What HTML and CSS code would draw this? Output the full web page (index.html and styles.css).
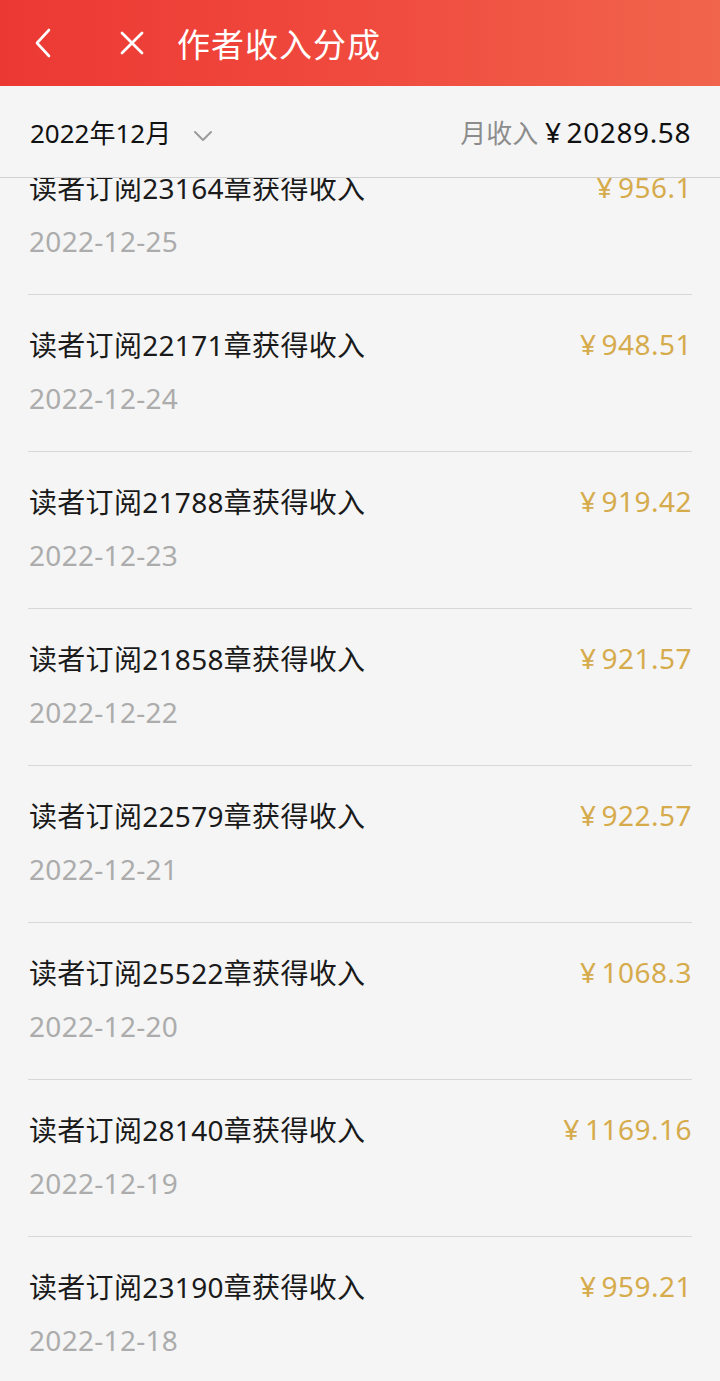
FILE: index.html
```html
<!DOCTYPE html>
<html>
	<head>
		<meta charset="UTF-8">
		<link rel="stylesheet" href="styles.css">
		<title>作者收入分成</title>
	</head>
	<body>
		<div class="app">
			<div class="topbar">
				<span class="topbar-btn back">
					<svg width="22" height="30" viewBox="0 0 22 30"><path d="M17 2 L5 15 L17 28" fill="none" stroke="#fff" stroke-width="2.6" stroke-linecap="round" stroke-linejoin="round"/></svg>
				</span>
				<span class="topbar-btn close">
					<svg width="26" height="26" viewBox="0 0 26 26"><path d="M3 3 L23 23 M23 3 L3 23" fill="none" stroke="#fff" stroke-width="2.8" stroke-linecap="round"/></svg>
				</span>
				<h1 class="topbar-title">作者收入分成</h1>
			</div>

			<div class="month-bar">
				<div class="month-pick">
					<span class="month-text">2022年12月</span>
					<svg class="month-arrow" width="20" height="12" viewBox="0 0 20 12"><path d="M2 2 L10 10 L18 2" fill="none" stroke="#9a9a9a" stroke-width="2" stroke-linecap="round" stroke-linejoin="round"/></svg>
				</div>
				<div class="month-total">
					<span class="month-total-label">月收入</span>
					<span class="month-total-value"><span class="yen">¥</span>20289.58</span>
				</div>
			</div>

			<div class="list">
				<div class="row">
					<div class="row-main">
						<span class="row-title">读者订阅23164章获得收入</span>
						<span class="row-amount"><span class="yen">¥</span>956.1</span>
					</div>
					<div class="row-date">2022-12-25</div>
				</div>
				<div class="row">
					<div class="row-main">
						<span class="row-title">读者订阅22171章获得收入</span>
						<span class="row-amount"><span class="yen">¥</span>948.51</span>
					</div>
					<div class="row-date">2022-12-24</div>
				</div>
				<div class="row">
					<div class="row-main">
						<span class="row-title">读者订阅21788章获得收入</span>
						<span class="row-amount"><span class="yen">¥</span>919.42</span>
					</div>
					<div class="row-date">2022-12-23</div>
				</div>
				<div class="row">
					<div class="row-main">
						<span class="row-title">读者订阅21858章获得收入</span>
						<span class="row-amount"><span class="yen">¥</span>921.57</span>
					</div>
					<div class="row-date">2022-12-22</div>
				</div>
				<div class="row">
					<div class="row-main">
						<span class="row-title">读者订阅22579章获得收入</span>
						<span class="row-amount"><span class="yen">¥</span>922.57</span>
					</div>
					<div class="row-date">2022-12-21</div>
				</div>
				<div class="row">
					<div class="row-main">
						<span class="row-title">读者订阅25522章获得收入</span>
						<span class="row-amount"><span class="yen">¥</span>1068.3</span>
					</div>
					<div class="row-date">2022-12-20</div>
				</div>
				<div class="row">
					<div class="row-main">
						<span class="row-title">读者订阅28140章获得收入</span>
						<span class="row-amount"><span class="yen">¥</span>1169.16</span>
					</div>
					<div class="row-date">2022-12-19</div>
				</div>
				<div class="row">
					<div class="row-main">
						<span class="row-title">读者订阅23190章获得收入</span>
						<span class="row-amount"><span class="yen">¥</span>959.21</span>
					</div>
					<div class="row-date">2022-12-18</div>
				</div>
			</div>
		</div>
	</body>
</html>
```

FILE: styles.css
```css
html, body {
	margin: 0;
	padding: 0;
	background: #f5f5f5;
}
body {
	font-family: "Noto Sans", "Noto Sans CJK SC", sans-serif;
}
.app {
	width: 720px;
	height: 1381px;
	overflow: hidden;
	display: flex;
	flex-direction: column;
}
.topbar {
	height: 86px;
	flex: none;
	display: flex;
	align-items: center;
	background: linear-gradient(90deg, #ec3833 0%, #f04a3e 50%, #f1654c 100%);
}
.topbar-btn {
	display: flex;
	align-items: center;
}
.back {
	margin-left: 32px;
}
.close {
	margin-left: 65px;
}
.topbar-title {
	margin: 0 0 0 32px;
	font-size: 33px;
	font-weight: normal;
	color: #fff;
	letter-spacing: 1px;
}
.month-bar {
	height: 91px;
	flex: none;
	display: flex;
	align-items: center;
	justify-content: space-between;
	padding: 0 29px 0 30px;
	border-bottom: 1px solid #d0d0d0;
	position: relative;
	z-index: 2;
	background: #f5f5f5;
}
.month-pick {
	display: flex;
	align-items: center;
}
.month-text {
	font-size: 26px;
	color: #111;
}
.month-arrow {
	margin-left: 22px;
	margin-top: 8px;
}
.month-total {
	font-size: 26px;
}
.month-total-label {
	color: #8c8c8c;
}
.month-total-value {
	color: #111;
	font-size: 28px;
	letter-spacing: 0.6px;
}
.yen {
	margin-right: 5px;
}
.list {
	flex: 1;
	overflow: hidden;
	position: relative;
	z-index: 1;
}
.row {
	margin: 0 28px;
	border-bottom: 1px solid #d8d8d8;
	box-sizing: border-box;
	height: 157px;
}
.row:first-child {
	margin-top: -40px;
}
.row-main {
	display: flex;
	justify-content: space-between;
	align-items: center;
	padding-top: 29px;
	height: 40px;
}
.row-title {
	font-size: 28px;
	color: #1a1a1a;
	padding-left: 1px;
	letter-spacing: 0.3px;
}
.row-amount {
	font-size: 28px;
	color: #d6ab4c;
	letter-spacing: 0.5px;
}
.row-date {
	margin-top: 15px;
	padding-left: 1px;
	font-size: 28px;
	color: #acacac;
	letter-spacing: 0.3px;
}
```
